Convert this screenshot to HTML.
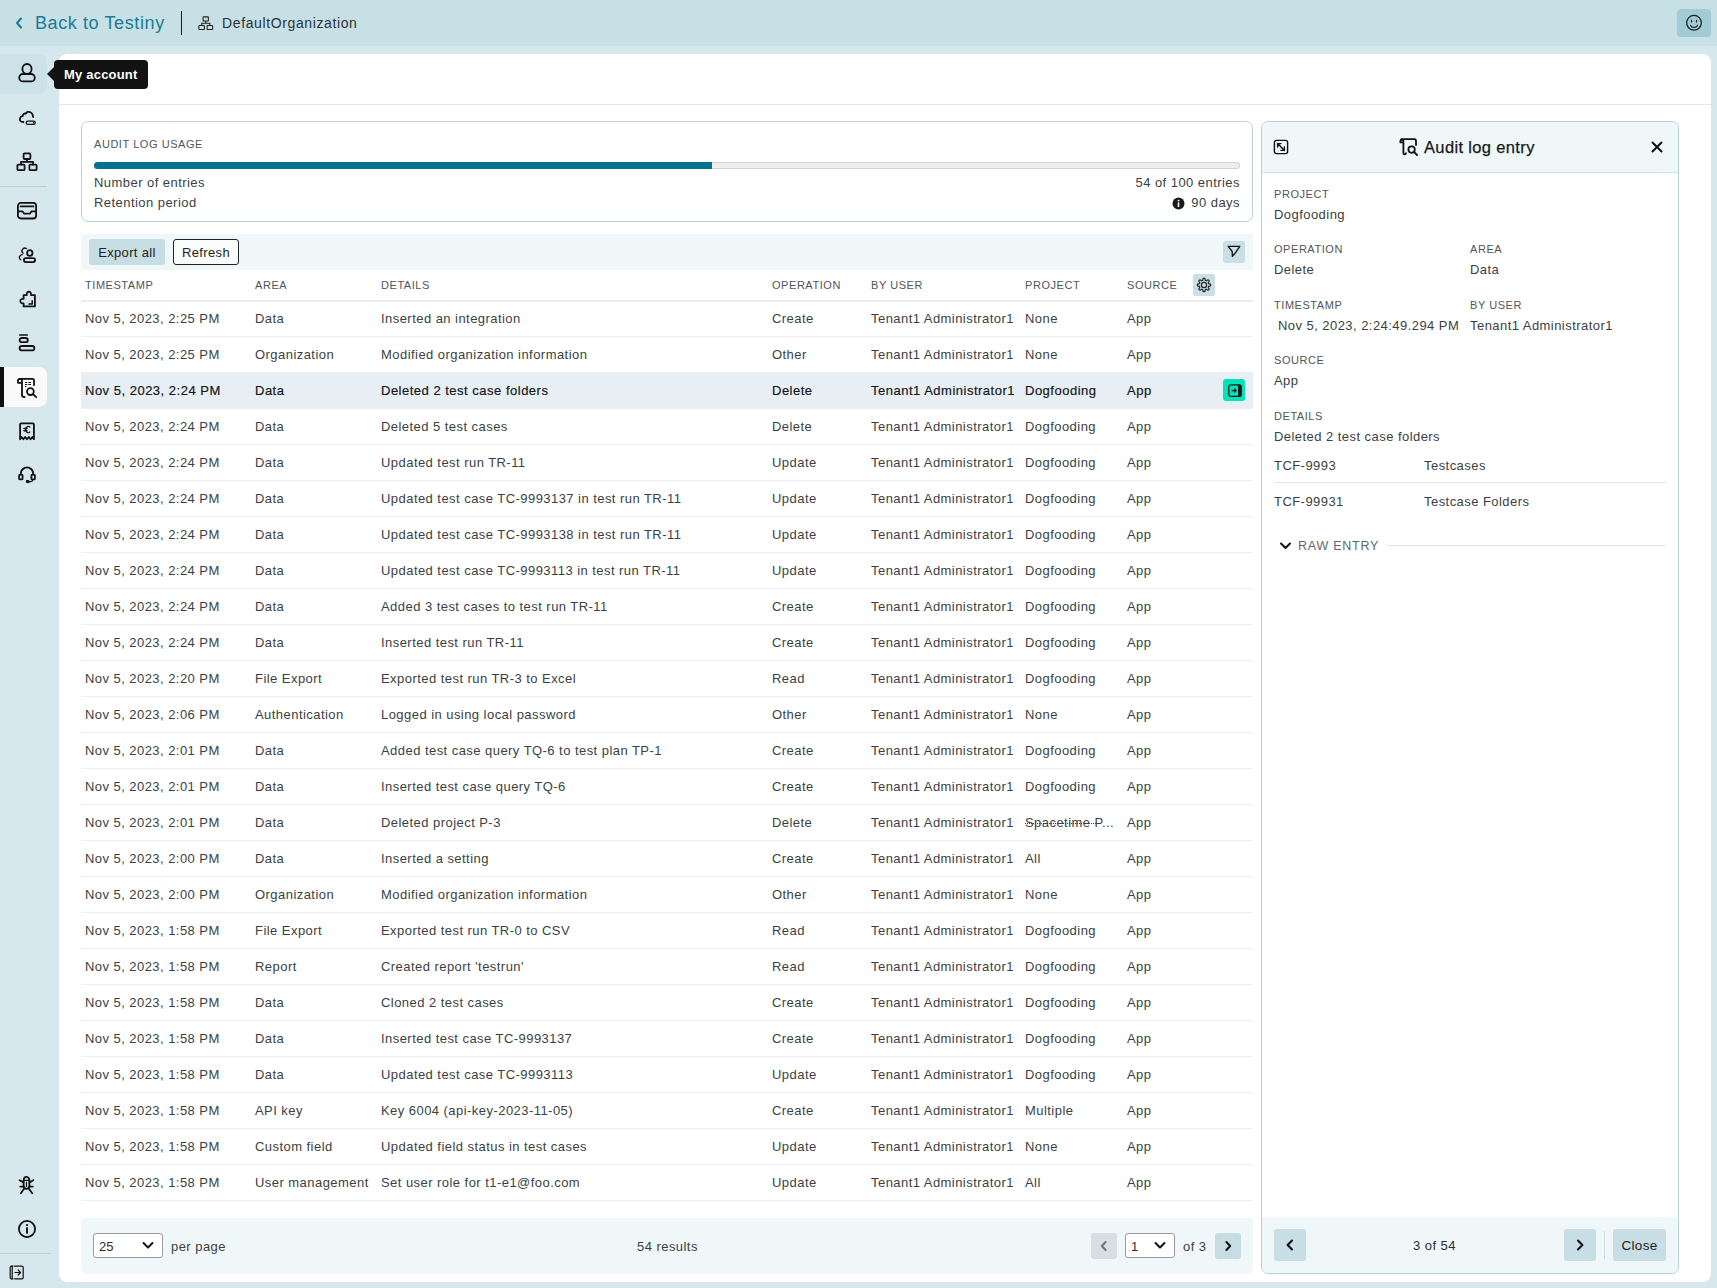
<!DOCTYPE html>
<html><head><meta charset="utf-8"><title>Audit log</title>
<style>
*{box-sizing:border-box;margin:0;padding:0}
html,body{width:1717px;height:1288px;overflow:hidden}
body{background:#d6e7ed;font-family:"Liberation Sans",sans-serif;color:#3b3f43;position:relative}
.abs{position:absolute}
.ic{position:absolute;display:block}
#top{position:absolute;left:0;top:0;width:1717px;height:46px;background:#c7e0e6}
#back{position:absolute;left:35px;top:12px;font-size:18px;letter-spacing:0.6px;color:#1b7a96;line-height:22px;white-space:nowrap}
#org{position:absolute;left:222px;top:14px;font-size:14px;letter-spacing:0.62px;color:#2d3236;line-height:18px;white-space:nowrap}
#sep{position:absolute;left:181px;top:11px;width:1px;height:24px;background:#1a1a1a}
#smile{position:absolute;left:1677px;top:9px;width:34px;height:28px;background:#a3cbd5;border-radius:4px}
.sideitem{position:absolute;left:0;width:47px;height:40px;border-radius:0 8px 8px 0}
.sidesep{position:absolute;left:0;height:1px;background:#bccfd5}
#main{position:absolute;left:59px;top:54px;width:1652px;height:1228px;background:#fff;border-radius:8px}
#mainhdr{position:absolute;left:59px;top:104px;width:1652px;height:1px;background:#e3e6e8}
#tip{position:absolute;left:54px;top:60px;width:94px;height:29px;background:#121212;border-radius:4px;color:#fff;font-size:13px;font-weight:bold;line-height:29px;padding-left:10px;letter-spacing:0.2px;white-space:nowrap}
#tip:before{content:"";position:absolute;left:-7px;top:6.5px;border-style:solid;border-width:7px 7px 7px 0;border-color:transparent #121212 transparent transparent}
#card{position:absolute;left:81px;top:121px;width:1172px;height:101px;border:1px solid #b9d5dc;border-radius:7px}
.lbl{position:absolute;font-size:11px;letter-spacing:0.55px;color:#50555a;line-height:14px;white-space:nowrap;text-transform:uppercase}
.txt{position:absolute;font-size:13px;letter-spacing:0.45px;color:#3b3f43;line-height:16px;white-space:nowrap}
#bar{position:absolute;left:94px;top:162px;width:1146px;height:7px;border-radius:4px;background:#eeeeee;box-shadow:inset 0 0 0 1px #d2d2d2}
#barfill{position:absolute;left:94px;top:162px;width:618px;height:7px;border-radius:4px 0 0 4px;background:#08718d}
#toolbar{position:absolute;left:81px;top:234px;width:1172px;height:36px;background:#eff7f8}
.btn{position:absolute;height:26px;border-radius:3px;font-size:13px;letter-spacing:0.35px;line-height:28px;color:#1e2226;white-space:nowrap;text-align:center}
.ibtn{position:absolute;width:22px;height:22px;border-radius:3px;background:#c9dfe5}
#thdr{position:absolute;left:81px;top:270px;width:1172px;height:32px;border-bottom:2px solid #ebebeb}
.row{position:absolute;left:81px;width:1172px;height:36px;border-bottom:1px solid #eeeeee}
.row .c{position:absolute;top:0;line-height:35px;font-size:13px;letter-spacing:0.45px;color:#3b3f43;white-space:nowrap}
.row.sel{background:#e7eff4}
.row.sel .c{color:#16191c;-webkit-text-stroke:0.2px #16191c;letter-spacing:0.5px}
.gbtn{position:absolute;left:1142px;top:6px;width:22px;height:22px;border-radius:3px;background:#03e2b8;padding:5px 4px 4px 5px}
.gbtn svg{display:block}
#footer{position:absolute;left:81px;top:1218px;width:1172px;height:56px;background:#eff7f8;border-radius:0 0 7px 7px}
.sel1{position:absolute;height:25px;border:1px solid #9a9a9a;border-radius:3px;background:#fff;font-size:13px;line-height:25px;padding-left:5px;color:#2a2e31}
#panel{position:absolute;left:1261px;top:121px;width:418px;height:1153px;border:1px solid #b7d1d8;border-radius:7px;overflow:hidden;background:#fff}
#phdr{position:absolute;left:0;top:0;width:416px;height:51px;background:#eff7f8;border-bottom:1px solid #d5e4e8}
#pfoot{position:absolute;left:0;top:1095px;width:416px;height:57px;background:#eff7f8}
.pbtn{position:absolute;height:32px;border-radius:3px;background:#c7dee4}
</style></head><body>
<div id="top"></div>
<svg class="ic" style="left:14px;top:16px" width="10" height="14" viewBox="0 0 10 14"><path d="M7 2.5 L3 7 L7 11.5" fill="none" stroke="#1b7a96" stroke-width="2" stroke-linecap="round" stroke-linejoin="round"/></svg>
<div id="back">Back to Testiny</div>
<div id="sep"></div>
<svg class="ic" style="left:198px;top:15.5px" width="15.5" height="14.6" viewBox="0 0 17 16"><g fill="none" stroke="#222" stroke-width="1.2"><rect x="5.6" y="1" width="5.8" height="4.4" rx="0.6"/><rect x="1" y="10.4" width="6" height="4.4" rx="0.6"/><rect x="10" y="10.4" width="6" height="4.4" rx="0.6"/><path d="M8.5 5.4 V8 M4 10.4 V8 H13 V10.4"/></g></svg>
<div id="org">DefaultOrganization</div>
<div id="smile"></div>
<svg class="ic" style="left:1685px;top:14px" width="18" height="18" viewBox="0 0 18 18"><g fill="none" stroke="#1a2326" stroke-width="1.3" stroke-linecap="round"><circle cx="9" cy="8.8" r="7.35"/><path d="M5.6 11.4 C6.8 14 11.2 14 12.4 11.4"/><path d="M6.5 6.3 V8 M11.5 6.3 V8" stroke-width="1.2"/></g></svg>

<div class="sideitem" style="top:54px;background:#cde2e8"></div>
<div class="sidesep" style="top:186px;width:47px"></div>
<div class="sideitem" style="top:367px;background:#fafafa"></div>
<div class="abs" style="left:0;top:367px;width:4px;height:40px;background:#111"></div>
<div class="sidesep" style="top:1253px;width:51px"></div>
<svg class="ic" style="left:17px;top:62px" width="20" height="21" viewBox="0 0 20 21"><g fill="none" stroke="#111" stroke-width="1.8" stroke-linecap="round" stroke-linejoin="round"><ellipse cx="10" cy="7" rx="4.6" ry="5"/><rect x="2.2" y="12" width="15.6" height="7.4" rx="3.7"/></g></svg><svg class="ic" style="left:17px;top:109px" width="21" height="18" viewBox="0 0 21 18"><g fill="none" stroke="#111" stroke-width="1.8" stroke-linecap="round" stroke-linejoin="round"><path d="M6.4 13 C3.6 13.2 2.2 11 3.2 8.8 C3.8 7.6 4.8 7.2 5.6 7.2 C5.8 5.2 7.4 4.2 8.8 4.6 C9.6 2.8 11.8 2.4 13.4 3.2 C15 4 16 5.8 16.2 8.2"/><rect x="9.2" y="12.1" width="9" height="3.2" rx="1.6" stroke-width="1.3"/><circle cx="16.5" cy="13.7" r="0.8" fill="#111" stroke="none"/></g></svg><svg class="ic" style="left:16px;top:152px" width="22" height="20" viewBox="0 0 22 20"><g fill="none" stroke="#111" stroke-width="1.8" stroke-linecap="round" stroke-linejoin="round"><rect x="7.6" y="1.4" width="6.8" height="5.6" rx="1"/><rect x="1.4" y="12.6" width="7.2" height="5.6" rx="1"/><rect x="13.4" y="12.6" width="7.2" height="5.6" rx="1"/><path d="M11 7 V9.8 M5 12.6 V9.8 H17 V12.6"/></g></svg><svg class="ic" style="left:16px;top:201px" width="22" height="19" viewBox="0 0 22 19"><g fill="none" stroke="#111" stroke-width="1.8" stroke-linecap="round" stroke-linejoin="round"><rect x="1.9" y="1.9" width="18.2" height="15.6" rx="3"/><path d="M4.6 5.4 H17.4"/><path d="M2.2 10.4 H6.6 L8 12.6 H14 L15.4 10.4 H19.8"/></g></svg><svg class="ic" style="left:17px;top:246px" width="21" height="19" viewBox="0 0 21 19"><g fill="none" stroke="#111" stroke-width="1.8" stroke-linecap="round" stroke-linejoin="round"><ellipse cx="12.8" cy="7" rx="2.7" ry="2.9"/><rect x="6.9" y="12.1" width="11.2" height="4" rx="2"/><path d="M9.4 2.6 A2.8 2.8 0 1 0 6.2 7.2" stroke-width="1.3"/><path d="M5.2 8.6 C2.4 9 1.2 12.2 3.8 13.8" stroke-width="1.3"/></g></svg><svg class="ic" style="left:17px;top:289px" width="20" height="20" viewBox="0 0 20 20"><g fill="none" stroke="#111" stroke-width="1.8" stroke-linecap="round" stroke-linejoin="round"><path d="M6.6 6.1 H9.8 C9.2 1.6 14.6 1.6 14 6.1 H17.9 V17.4 H6.6 V14.4 C2.2 15 2.2 9.2 6.6 9.9 Z"/><path d="M15.2 11.8 V14.9 H12" stroke-width="1.5"/></g></svg><svg class="ic" style="left:17px;top:333px" width="20" height="20" viewBox="0 0 20 20"><g fill="none" stroke="#111" stroke-width="1.8" stroke-linecap="round" stroke-linejoin="round"><path d="M2.6 2 H10.4" stroke-width="1.3"/><rect x="2.6" y="5" width="8.2" height="4.2" rx="2"/><rect x="2.6" y="13" width="14.8" height="4.4" rx="2.2"/></g></svg><svg class="ic" style="left:16px;top:377px" width="22" height="22" viewBox="0 0 22 22"><g fill="none" stroke="#111" stroke-width="1.8" stroke-linecap="round" stroke-linejoin="round"><path d="M6 18.2 C6 19.6 7 20 8.6 20 M6 18.2 V3.4 M2 5.8 V3.4 C2 2.4 2.8 1.8 3.8 1.8 C5 1.8 6 2.4 6 3.4 V5.8 Z"/><path d="M3.8 1.8 H16.4 C17.4 1.8 18 2.4 18 3.4 V8"/><path d="M9 5.5 H11.2 M12.3 5.5 H15 M9 7.5 H11.2 M12.3 7.5 H15 M9 9.5 H10.4" stroke-width="1" stroke-linecap="butt"/><circle cx="14.4" cy="14.6" r="3.4"/><path d="M17 17.2 L20.2 20.2"/></g></svg><svg class="ic" style="left:17px;top:421px" width="20" height="21" viewBox="0 0 20 21"><g fill="none" stroke="#111" stroke-width="1.8" stroke-linecap="round" stroke-linejoin="round"><path d="M3.1 18.2 V3.3 C3.1 2.7 3.5 2.3 4.1 2.3 H15.9 C16.5 2.3 16.9 2.7 16.9 3.3 V18.2 L15.4 16 L13.6 18.2 L11.8 16 L10 18.2 L8.2 16 L6.4 18.2 L4.6 16 Z"/><path d="M12.8 6.2 C11.6 4.9 8.8 5.2 8.8 8.6 C8.8 12 11.6 12.3 12.8 11" stroke-width="1.2"/><path d="M7 7.5 H10 M7 9.7 H10" stroke-width="1.4"/></g></svg><svg class="ic" style="left:17px;top:466px" width="20" height="19" viewBox="0 0 20 19"><g fill="none" stroke="#111" stroke-width="1.8" stroke-linecap="round" stroke-linejoin="round"><path d="M3.8 8.4 V7.8 C3.8 4.2 6.6 1.4 10 1.4 C13.4 1.4 16.2 4.2 16.2 7.8 V8.4"/><rect x="2.1" y="8.7" width="3.5" height="4.7" rx="1"/><rect x="14.4" y="8.7" width="3.5" height="4.7" rx="1"/><path d="M12 15.6 H13.6 C14.8 15.6 15.6 14.8 15.8 13.8" stroke-width="1.3"/><rect x="9.4" y="14.6" width="2.8" height="2" rx="0.4" fill="#111" stroke-width="1"/></g></svg><svg class="ic" style="left:17px;top:1175px" width="19" height="20" viewBox="0 0 19 20"><g fill="none" stroke="#111" stroke-width="1.8" stroke-linecap="round" stroke-linejoin="round"><path d="M9.5 1.8 C7.6 1.8 6.6 3.6 6.6 5.8 V10.6 C6.6 13 7.8 13.9 9.5 13.9 C11.2 13.9 12.4 13 12.4 10.6 V5.8 C12.4 3.6 11.4 1.8 9.5 1.8 Z"/><path d="M6.8 5.4 H12.2" stroke-width="1.2"/><path d="M9.5 7 V11.6" stroke-width="1.2"/><path d="M6.6 7.4 L2.6 5.2 M12.4 7.4 L16.4 5.2 M6.6 11.6 H3.2 M12.4 11.6 H15.8 M7.2 13.4 L3.8 18.2 M11.8 13.4 L15.2 18.2"/></g></svg><svg class="ic" style="left:17px;top:1219px" width="20" height="20" viewBox="0 0 20 20"><g fill="none" stroke="#111" stroke-width="1.8"><circle cx="10" cy="10" r="8.1"/></g><circle cx="10" cy="6.1" r="1.15" fill="#111"/><rect x="9.05" y="8.3" width="1.9" height="6.4" fill="#111"/></svg><svg class="ic" style="left:9px;top:1265px" width="16" height="15" viewBox="0 0 16 15"><g fill="none" stroke="#111" stroke-width="1.2" stroke-linecap="round" stroke-linejoin="round"><path d="M4 1.2 H2.6 C1.6 1.2 1.2 1.6 1.2 2.6 V12.4 C1.2 13.4 1.6 13.8 2.6 13.8 H4"/><path d="M3.2 1.2 V13.8"/><path d="M5.6 1.2 H12.8 C13.8 1.2 14.2 1.6 14.2 2.6 V12.4 C14.2 13.4 13.8 13.8 12.8 13.8 H5.6"/><path d="M6 7.5 H11.6 M9.2 5 L11.6 7.5 L9.2 10"/></g></svg>

<div id="main"></div>
<div id="mainhdr"></div>
<div id="tip">My account</div>

<div id="card"></div>
<div class="lbl" style="left:94px;top:137px">Audit log usage</div>
<div id="bar"></div><div id="barfill"></div>
<div class="txt" style="left:94px;top:175px">Number of entries</div>
<div class="txt" style="left:94px;top:195px">Retention period</div>
<div class="txt" style="right:477px;top:175px">54 of 100 entries</div>
<div class="txt" style="right:477px;top:195px">90 days</div>
<svg class="ic" style="left:1172px;top:197px" width="13" height="13" viewBox="0 0 13 13"><circle cx="6.5" cy="6.5" r="6" fill="#1a1a1a"/><rect x="5.7" y="5.4" width="1.6" height="4.6" fill="#fff"/><circle cx="6.5" cy="3.6" r="0.95" fill="#fff"/></svg>

<div id="toolbar"></div>
<div class="btn" style="left:89px;top:239px;width:76px;background:#c6dde4">Export all</div>
<div class="btn" style="left:173px;top:239px;width:66px;border:1px solid #1e2226;background:#fbfdfd;line-height:26px">Refresh</div>
<div class="ibtn" style="left:1223px;top:241px"></div>
<svg class="ic" style="left:1227px;top:245px" width="14" height="14" viewBox="0 0 14 14"><path d="M1.2 1.4 H12.8 L7.7 8.8 L5.4 11.4 L5.2 6.5 Z" fill="none" stroke="#111" stroke-width="1.3" stroke-linejoin="round"/></svg>

<div id="thdr"></div>
<div class="lbl" style="left:85px;top:278px">Timestamp</div>
<div class="lbl" style="left:255px;top:278px">Area</div>
<div class="lbl" style="left:381px;top:278px">Details</div>
<div class="lbl" style="left:772px;top:278px">Operation</div>
<div class="lbl" style="left:871px;top:278px">By user</div>
<div class="lbl" style="left:1025px;top:278px">Project</div>
<div class="lbl" style="left:1127px;top:278px">Source</div>
<div class="ibtn" style="left:1193px;top:274px"></div>
<svg class="ic" style="left:1196px;top:277px" width="16" height="16" viewBox="0 0 16 16"><g fill="none" stroke="#222" stroke-width="1.2" stroke-linejoin="round"><path d="M14.65 8.00 L14.64 8.26 L14.61 8.52 L14.52 8.77 L14.25 8.99 L13.59 9.11 L12.94 9.18 L12.65 9.31 L12.54 9.47 L12.46 9.65 L12.39 9.82 L12.32 9.99 L12.25 10.17 L12.22 10.36 L12.33 10.65 L12.74 11.17 L13.12 11.72 L13.16 12.07 L13.04 12.31 L12.88 12.51 L12.70 12.70 L12.51 12.88 L12.31 13.04 L12.07 13.16 L11.72 13.12 L11.17 12.74 L10.65 12.33 L10.36 12.22 L10.17 12.25 L9.99 12.32 L9.82 12.39 L9.65 12.46 L9.47 12.54 L9.31 12.65 L9.18 12.94 L9.11 13.59 L8.99 14.25 L8.77 14.52 L8.52 14.61 L8.26 14.64 L8.00 14.65 L7.74 14.64 L7.48 14.61 L7.23 14.52 L7.01 14.25 L6.89 13.59 L6.82 12.94 L6.69 12.65 L6.53 12.54 L6.35 12.46 L6.18 12.39 L6.01 12.32 L5.83 12.25 L5.64 12.22 L5.35 12.33 L4.83 12.74 L4.28 13.12 L3.93 13.16 L3.69 13.04 L3.49 12.88 L3.30 12.70 L3.12 12.51 L2.96 12.31 L2.84 12.07 L2.88 11.72 L3.26 11.17 L3.67 10.65 L3.78 10.36 L3.75 10.17 L3.68 9.99 L3.61 9.82 L3.54 9.65 L3.46 9.47 L3.35 9.31 L3.06 9.18 L2.41 9.11 L1.75 8.99 L1.48 8.77 L1.39 8.52 L1.36 8.26 L1.35 8.00 L1.36 7.74 L1.39 7.48 L1.48 7.23 L1.75 7.01 L2.41 6.89 L3.06 6.82 L3.35 6.69 L3.46 6.53 L3.54 6.35 L3.61 6.18 L3.68 6.01 L3.75 5.83 L3.78 5.64 L3.67 5.35 L3.26 4.83 L2.88 4.28 L2.84 3.93 L2.96 3.69 L3.12 3.49 L3.30 3.30 L3.49 3.12 L3.69 2.96 L3.93 2.84 L4.28 2.88 L4.83 3.26 L5.35 3.67 L5.64 3.78 L5.83 3.75 L6.01 3.68 L6.18 3.61 L6.35 3.54 L6.53 3.46 L6.69 3.35 L6.82 3.06 L6.89 2.41 L7.01 1.75 L7.23 1.48 L7.48 1.39 L7.74 1.36 L8.00 1.35 L8.26 1.36 L8.52 1.39 L8.77 1.48 L8.99 1.75 L9.11 2.41 L9.18 3.06 L9.31 3.35 L9.47 3.46 L9.65 3.54 L9.82 3.61 L9.99 3.68 L10.17 3.75 L10.36 3.78 L10.65 3.67 L11.17 3.26 L11.72 2.88 L12.07 2.84 L12.31 2.96 L12.51 3.12 L12.70 3.30 L12.88 3.49 L13.04 3.69 L13.16 3.93 L13.12 4.28 L12.74 4.83 L12.33 5.35 L12.22 5.64 L12.25 5.83 L12.32 6.01 L12.39 6.18 L12.46 6.35 L12.54 6.53 L12.65 6.69 L12.94 6.82 L13.59 6.89 L14.25 7.01 L14.52 7.23 L14.61 7.48 L14.64 7.74 Z"/><circle cx="8" cy="8" r="2.6"/></g></svg>

<div class="row" style="top:301px"><span class="c" style="left:4px">Nov 5, 2023, 2:25 PM</span><span class="c" style="left:174px">Data</span><span class="c" style="left:300px">Inserted an integration</span><span class="c" style="left:691px">Create</span><span class="c" style="left:790px">Tenant1 Administrator1</span><span class="c" style="left:944px">None</span><span class="c" style="left:1046px">App</span></div>
<div class="row" style="top:337px"><span class="c" style="left:4px">Nov 5, 2023, 2:25 PM</span><span class="c" style="left:174px">Organization</span><span class="c" style="left:300px">Modified organization information</span><span class="c" style="left:691px">Other</span><span class="c" style="left:790px">Tenant1 Administrator1</span><span class="c" style="left:944px">None</span><span class="c" style="left:1046px">App</span></div>
<div class="row sel" style="top:373px"><span class="c" style="left:4px">Nov 5, 2023, 2:24 PM</span><span class="c" style="left:174px">Data</span><span class="c" style="left:300px">Deleted 2 test case folders</span><span class="c" style="left:691px">Delete</span><span class="c" style="left:790px">Tenant1 Administrator1</span><span class="c" style="left:944px">Dogfooding</span><span class="c" style="left:1046px">App</span><div class="gbtn"><svg width="14" height="14" viewBox="0 0 14 14"><rect x="0.8" y="0.8" width="12.4" height="11.6" rx="2" fill="none" stroke="#0a1a16" stroke-width="1.2"/><path d="M10 0.8 H11.2 C12.4 0.8 13.2 1.6 13.2 2.8 V10.4 C13.2 11.6 12.4 12.4 11.2 12.4 H10 Z" fill="#0a1a16"/><path d="M4 6.6 H8.2 M6.6 5 L8.2 6.6 L6.6 8.2" fill="none" stroke="#0a1a16" stroke-width="1.2" stroke-linecap="round" stroke-linejoin="round"/></svg></div></div>
<div class="row" style="top:409px"><span class="c" style="left:4px">Nov 5, 2023, 2:24 PM</span><span class="c" style="left:174px">Data</span><span class="c" style="left:300px">Deleted 5 test cases</span><span class="c" style="left:691px">Delete</span><span class="c" style="left:790px">Tenant1 Administrator1</span><span class="c" style="left:944px">Dogfooding</span><span class="c" style="left:1046px">App</span></div>
<div class="row" style="top:445px"><span class="c" style="left:4px">Nov 5, 2023, 2:24 PM</span><span class="c" style="left:174px">Data</span><span class="c" style="left:300px">Updated test run TR-11</span><span class="c" style="left:691px">Update</span><span class="c" style="left:790px">Tenant1 Administrator1</span><span class="c" style="left:944px">Dogfooding</span><span class="c" style="left:1046px">App</span></div>
<div class="row" style="top:481px"><span class="c" style="left:4px">Nov 5, 2023, 2:24 PM</span><span class="c" style="left:174px">Data</span><span class="c" style="left:300px">Updated test case TC-9993137 in test run TR-11</span><span class="c" style="left:691px">Update</span><span class="c" style="left:790px">Tenant1 Administrator1</span><span class="c" style="left:944px">Dogfooding</span><span class="c" style="left:1046px">App</span></div>
<div class="row" style="top:517px"><span class="c" style="left:4px">Nov 5, 2023, 2:24 PM</span><span class="c" style="left:174px">Data</span><span class="c" style="left:300px">Updated test case TC-9993138 in test run TR-11</span><span class="c" style="left:691px">Update</span><span class="c" style="left:790px">Tenant1 Administrator1</span><span class="c" style="left:944px">Dogfooding</span><span class="c" style="left:1046px">App</span></div>
<div class="row" style="top:553px"><span class="c" style="left:4px">Nov 5, 2023, 2:24 PM</span><span class="c" style="left:174px">Data</span><span class="c" style="left:300px">Updated test case TC-9993113 in test run TR-11</span><span class="c" style="left:691px">Update</span><span class="c" style="left:790px">Tenant1 Administrator1</span><span class="c" style="left:944px">Dogfooding</span><span class="c" style="left:1046px">App</span></div>
<div class="row" style="top:589px"><span class="c" style="left:4px">Nov 5, 2023, 2:24 PM</span><span class="c" style="left:174px">Data</span><span class="c" style="left:300px">Added 3 test cases to test run TR-11</span><span class="c" style="left:691px">Create</span><span class="c" style="left:790px">Tenant1 Administrator1</span><span class="c" style="left:944px">Dogfooding</span><span class="c" style="left:1046px">App</span></div>
<div class="row" style="top:625px"><span class="c" style="left:4px">Nov 5, 2023, 2:24 PM</span><span class="c" style="left:174px">Data</span><span class="c" style="left:300px">Inserted test run TR-11</span><span class="c" style="left:691px">Create</span><span class="c" style="left:790px">Tenant1 Administrator1</span><span class="c" style="left:944px">Dogfooding</span><span class="c" style="left:1046px">App</span></div>
<div class="row" style="top:661px"><span class="c" style="left:4px">Nov 5, 2023, 2:20 PM</span><span class="c" style="left:174px">File Export</span><span class="c" style="left:300px">Exported test run TR-3 to Excel</span><span class="c" style="left:691px">Read</span><span class="c" style="left:790px">Tenant1 Administrator1</span><span class="c" style="left:944px">Dogfooding</span><span class="c" style="left:1046px">App</span></div>
<div class="row" style="top:697px"><span class="c" style="left:4px">Nov 5, 2023, 2:06 PM</span><span class="c" style="left:174px">Authentication</span><span class="c" style="left:300px">Logged in using local password</span><span class="c" style="left:691px">Other</span><span class="c" style="left:790px">Tenant1 Administrator1</span><span class="c" style="left:944px">None</span><span class="c" style="left:1046px">App</span></div>
<div class="row" style="top:733px"><span class="c" style="left:4px">Nov 5, 2023, 2:01 PM</span><span class="c" style="left:174px">Data</span><span class="c" style="left:300px">Added test case query TQ-6 to test plan TP-1</span><span class="c" style="left:691px">Create</span><span class="c" style="left:790px">Tenant1 Administrator1</span><span class="c" style="left:944px">Dogfooding</span><span class="c" style="left:1046px">App</span></div>
<div class="row" style="top:769px"><span class="c" style="left:4px">Nov 5, 2023, 2:01 PM</span><span class="c" style="left:174px">Data</span><span class="c" style="left:300px">Inserted test case query TQ-6</span><span class="c" style="left:691px">Create</span><span class="c" style="left:790px">Tenant1 Administrator1</span><span class="c" style="left:944px">Dogfooding</span><span class="c" style="left:1046px">App</span></div>
<div class="row" style="top:805px"><span class="c" style="left:4px">Nov 5, 2023, 2:01 PM</span><span class="c" style="left:174px">Data</span><span class="c" style="left:300px">Deleted project P-3</span><span class="c" style="left:691px">Delete</span><span class="c" style="left:790px">Tenant1 Administrator1</span><span class="c" style="left:944px"><s style="text-decoration-style:dotted;text-decoration-thickness:1px">Spacetime P</s>...</span><span class="c" style="left:1046px">App</span></div>
<div class="row" style="top:841px"><span class="c" style="left:4px">Nov 5, 2023, 2:00 PM</span><span class="c" style="left:174px">Data</span><span class="c" style="left:300px">Inserted a setting</span><span class="c" style="left:691px">Create</span><span class="c" style="left:790px">Tenant1 Administrator1</span><span class="c" style="left:944px">All</span><span class="c" style="left:1046px">App</span></div>
<div class="row" style="top:877px"><span class="c" style="left:4px">Nov 5, 2023, 2:00 PM</span><span class="c" style="left:174px">Organization</span><span class="c" style="left:300px">Modified organization information</span><span class="c" style="left:691px">Other</span><span class="c" style="left:790px">Tenant1 Administrator1</span><span class="c" style="left:944px">None</span><span class="c" style="left:1046px">App</span></div>
<div class="row" style="top:913px"><span class="c" style="left:4px">Nov 5, 2023, 1:58 PM</span><span class="c" style="left:174px">File Export</span><span class="c" style="left:300px">Exported test run TR-0 to CSV</span><span class="c" style="left:691px">Read</span><span class="c" style="left:790px">Tenant1 Administrator1</span><span class="c" style="left:944px">Dogfooding</span><span class="c" style="left:1046px">App</span></div>
<div class="row" style="top:949px"><span class="c" style="left:4px">Nov 5, 2023, 1:58 PM</span><span class="c" style="left:174px">Report</span><span class="c" style="left:300px">Created report 'testrun'</span><span class="c" style="left:691px">Read</span><span class="c" style="left:790px">Tenant1 Administrator1</span><span class="c" style="left:944px">Dogfooding</span><span class="c" style="left:1046px">App</span></div>
<div class="row" style="top:985px"><span class="c" style="left:4px">Nov 5, 2023, 1:58 PM</span><span class="c" style="left:174px">Data</span><span class="c" style="left:300px">Cloned 2 test cases</span><span class="c" style="left:691px">Create</span><span class="c" style="left:790px">Tenant1 Administrator1</span><span class="c" style="left:944px">Dogfooding</span><span class="c" style="left:1046px">App</span></div>
<div class="row" style="top:1021px"><span class="c" style="left:4px">Nov 5, 2023, 1:58 PM</span><span class="c" style="left:174px">Data</span><span class="c" style="left:300px">Inserted test case TC-9993137</span><span class="c" style="left:691px">Create</span><span class="c" style="left:790px">Tenant1 Administrator1</span><span class="c" style="left:944px">Dogfooding</span><span class="c" style="left:1046px">App</span></div>
<div class="row" style="top:1057px"><span class="c" style="left:4px">Nov 5, 2023, 1:58 PM</span><span class="c" style="left:174px">Data</span><span class="c" style="left:300px">Updated test case TC-9993113</span><span class="c" style="left:691px">Update</span><span class="c" style="left:790px">Tenant1 Administrator1</span><span class="c" style="left:944px">Dogfooding</span><span class="c" style="left:1046px">App</span></div>
<div class="row" style="top:1093px"><span class="c" style="left:4px">Nov 5, 2023, 1:58 PM</span><span class="c" style="left:174px">API key</span><span class="c" style="left:300px">Key 6004 (api-key-2023-11-05)</span><span class="c" style="left:691px">Create</span><span class="c" style="left:790px">Tenant1 Administrator1</span><span class="c" style="left:944px">Multiple</span><span class="c" style="left:1046px">App</span></div>
<div class="row" style="top:1129px"><span class="c" style="left:4px">Nov 5, 2023, 1:58 PM</span><span class="c" style="left:174px">Custom field</span><span class="c" style="left:300px">Updated field status in test cases</span><span class="c" style="left:691px">Update</span><span class="c" style="left:790px">Tenant1 Administrator1</span><span class="c" style="left:944px">None</span><span class="c" style="left:1046px">App</span></div>
<div class="row" style="top:1165px"><span class="c" style="left:4px">Nov 5, 2023, 1:58 PM</span><span class="c" style="left:174px">User management</span><span class="c" style="left:300px">Set user role for t1-e1@foo.com</span><span class="c" style="left:691px">Update</span><span class="c" style="left:790px">Tenant1 Administrator1</span><span class="c" style="left:944px">All</span><span class="c" style="left:1046px">App</span></div>

<div id="footer"></div>
<div class="sel1" style="left:93px;top:1233px;width:70px">25</div>
<svg class="ic" style="left:142px;top:1241px" width="12" height="9" viewBox="0 0 12 9"><path d="M1.5 2 L6 6.5 L10.5 2" fill="none" stroke="#111" stroke-width="2" stroke-linecap="round" stroke-linejoin="round"/></svg>
<div class="txt" style="left:171px;top:1239px">per page</div>
<div class="txt" style="left:637px;top:1239px">54 results</div>
<div class="abs" style="left:1091px;top:1233px;width:26px;height:26px;border-radius:3px;background:#d6e0e3"></div>
<svg class="ic" style="left:1098px;top:1240px" width="12" height="12" viewBox="0 0 12 12"><path d="M7.6 2 L3.8 6 L7.6 10" fill="none" stroke="#6f7577" stroke-width="2" stroke-linecap="round" stroke-linejoin="round"/></svg>
<div class="sel1" style="left:1125px;top:1233px;width:50px">1</div>
<svg class="ic" style="left:1154px;top:1241px" width="12" height="9" viewBox="0 0 12 9"><path d="M1.5 2 L6 6.5 L10.5 2" fill="none" stroke="#111" stroke-width="2" stroke-linecap="round" stroke-linejoin="round"/></svg>
<div class="txt" style="left:1183px;top:1239px">of 3</div>
<div class="abs" style="left:1215px;top:1233px;width:26px;height:26px;border-radius:3px;background:#c6dde4"></div>
<svg class="ic" style="left:1222px;top:1240px" width="12" height="12" viewBox="0 0 12 12"><path d="M4.4 2 L8.2 6 L4.4 10" fill="none" stroke="#111" stroke-width="2" stroke-linecap="round" stroke-linejoin="round"/></svg>

<div id="panel">
  <div id="phdr"></div>
  <div id="pfoot"></div>
</div>
<svg class="ic" style="left:1273px;top:139px" width="16" height="16" viewBox="0 0 16 16"><g fill="none" stroke="#111" stroke-width="1.4" stroke-linecap="round" stroke-linejoin="round"><rect x="1.4" y="1.4" width="13.2" height="13.2" rx="2"/><path d="M4.6 4.6 L11.4 11.4 M4.6 8 V4.6 H8 M11.4 8 V11.4 H8"/></g></svg>
<svg class="ic" style="left:1399px;top:138px" width="20" height="18" viewBox="0 0 20 18"><g fill="none" stroke="#111" stroke-width="1.8" stroke-linecap="round" stroke-linejoin="round"><path d="M4.4 3 C4.4 1.2 1.4 1.2 1.4 3 V4.4 H4.4 V15.2 C4.4 16.8 7 16.8 7 15.2"/><path d="M2.4 1.2 H15.4 C16.6 1.2 17 2 17 3.2 V7"/><circle cx="12.6" cy="11.6" r="3.2"/><path d="M15 14 L18 17"/></g></svg>
<div class="abs" style="left:1424px;top:137px;font-size:16.5px;-webkit-text-stroke:0.25px #16191c;color:#16191c;line-height:20px;letter-spacing:0.35px;white-space:nowrap">Audit log entry</div>
<svg class="ic" style="left:1650px;top:140px" width="14" height="14" viewBox="0 0 14 14"><path d="M2.5 2.5 L11.5 11.5 M11.5 2.5 L2.5 11.5" stroke="#111" stroke-width="2" stroke-linecap="round"/></svg>

<div class="lbl" style="left:1274px;top:187px">Project</div>
<div class="txt" style="left:1274px;top:207px">Dogfooding</div>
<div class="lbl" style="left:1274px;top:242px">Operation</div>
<div class="txt" style="left:1274px;top:262px">Delete</div>
<div class="lbl" style="left:1470px;top:242px">Area</div>
<div class="txt" style="left:1470px;top:262px">Data</div>
<div class="lbl" style="left:1274px;top:298px">Timestamp</div>
<div class="txt" style="left:1278px;top:318px">Nov 5, 2023, 2:24:49.294 PM</div>
<div class="lbl" style="left:1470px;top:298px">By user</div>
<div class="txt" style="left:1470px;top:318px">Tenant1 Administrator1</div>
<div class="lbl" style="left:1274px;top:353px">Source</div>
<div class="txt" style="left:1274px;top:373px">App</div>
<div class="lbl" style="left:1274px;top:409px">Details</div>
<div class="txt" style="left:1274px;top:429px">Deleted 2 test case folders</div>
<div class="txt" style="left:1274px;top:458px">TCF-9993</div>
<div class="txt" style="left:1424px;top:458px">Testcases</div>
<div class="abs" style="left:1274px;top:482px;width:392px;height:1px;background:#e6e6e6"></div>
<div class="txt" style="left:1274px;top:494px">TCF-99931</div>
<div class="txt" style="left:1424px;top:494px">Testcase Folders</div>
<svg class="ic" style="left:1279px;top:540px" width="13" height="12" viewBox="0 0 13 12"><path d="M2 3.5 L6.5 8 L11 3.5" fill="none" stroke="#111" stroke-width="2" stroke-linecap="round" stroke-linejoin="round"/></svg>
<div class="abs" style="left:1298px;top:538px;font-size:12.5px;letter-spacing:0.75px;color:#62676c;line-height:17px;white-space:nowrap">RAW ENTRY</div>
<div class="abs" style="left:1387px;top:545px;width:279px;height:1px;background:#e3e3e3"></div>

<div class="pbtn" style="left:1274px;top:1229px;width:32px"></div>
<svg class="ic" style="left:1283px;top:1238px" width="14" height="14" viewBox="0 0 14 14"><path d="M9 2.5 L4.6 7 L9 11.5" fill="none" stroke="#111" stroke-width="2.1" stroke-linecap="round" stroke-linejoin="round"/></svg>
<div class="txt" style="left:1413px;top:1238px;color:#2a2e31">3 of 54</div>
<div class="pbtn" style="left:1564px;top:1229px;width:32px"></div>
<svg class="ic" style="left:1573px;top:1238px" width="14" height="14" viewBox="0 0 14 14"><path d="M5 2.5 L9.4 7 L5 11.5" fill="none" stroke="#111" stroke-width="2.1" stroke-linecap="round" stroke-linejoin="round"/></svg>
<div class="abs" style="left:1604px;top:1231px;width:1px;height:28px;background:#cfdde1"></div>
<div class="pbtn" style="left:1613px;top:1229px;width:53px;font-size:13.5px;letter-spacing:0.3px;line-height:34px;text-align:center;color:#1e2226">Close</div>
</body></html>
